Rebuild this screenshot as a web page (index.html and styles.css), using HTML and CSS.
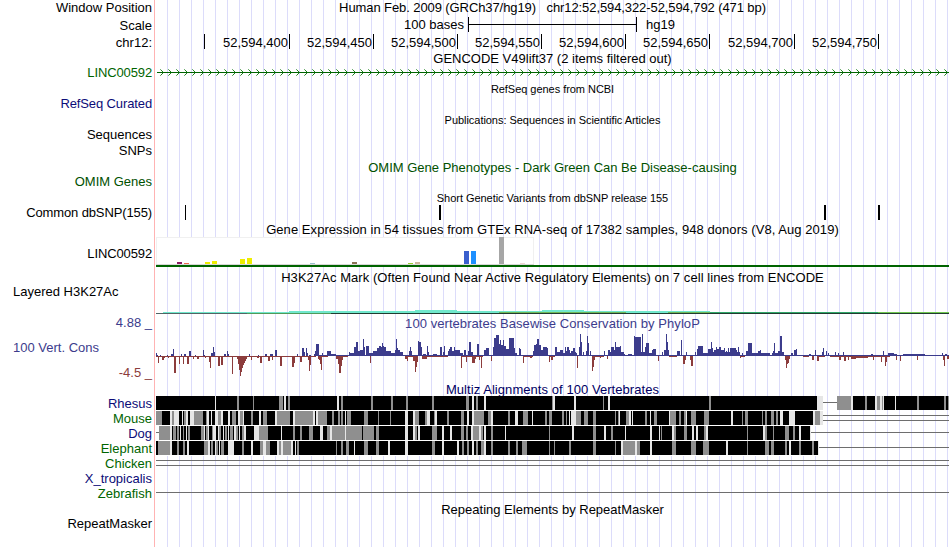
FILE: index.html
```
<!DOCTYPE html>
<html lang="en">
<head>
    <meta charset="UTF-8">
    <meta name="viewport" content="width=device-width, initial-scale=1.0">
    <title>Genome Browser - chr12:52,594,322-52,594,792</title>
    <link rel="stylesheet" href="styles.css">
</head>
<body>
    <div class="browser">
        <!-- position and ruler -->
        <div class="row position"><div class="label">Window Position</div><div class="main title">Human Feb. 2009 (GRCh37/hg19) &nbsp; chr12:52,594,322-52,594,792 (471 bp)</div></div>
        <div class="row scale">
            <div class="label">Scale</div>
            <div class="main"><span class="bases">100 bases</span><span class="scale-bar"></span><span>hg19</span></div>
        </div>
        <div class="row ruler">
            <div class="label">chr12:</div>
            <div class="main">
                <span class="tick first"></span>
                <span class="tick wide">52,594,400</span>
                <span class="tick">52,594,450</span>
                <span class="tick">52,594,500</span>
                <span class="tick">52,594,550</span>
                <span class="tick">52,594,600</span>
                <span class="tick">52,594,650</span>
                <span class="tick wide">52,594,700</span>
                <span class="tick">52,594,750</span>
            </div>
        </div>

        <!-- genes -->
        <div class="row head gencode"><div class="label"></div><div class="main title">GENCODE V49lift37 (2 items filtered out)</div></div>
        <div class="row"><div class="label narrow green">LINC00592</div><svg id="gene" viewBox="155 0 795 15"></svg></div>
        <div class="row head"><div class="label"></div><div class="main title small">RefSeq genes from NCBI</div></div>
        <div class="row"><div class="label narrow navy">RefSeq Curated</div></div>
        <div class="row head"><div class="label"></div><div class="main title small">Publications: Sequences in Scientific Articles</div></div>
        <div class="row tall"><div class="label">Sequences</div></div>
        <div class="row"><div class="label">SNPs</div></div>
        <div class="row head omim-head"><div class="label"></div><div class="main title omim">OMIM Gene Phenotypes - Dark Green Can Be Disease-causing</div></div>
        <div class="row"><div class="label omim">OMIM Genes</div></div>

        <!-- variants -->
        <div class="row head"><div class="label"></div><div class="main title small">Short Genetic Variants from dbSNP release 155</div></div>
        <div class="row tall"><div class="label narrow">Common dbSNP(155)</div><svg id="snps" viewBox="155 0 795 16"></svg></div>

        <!-- expression -->
        <div class="row head gtex-head"><div class="label"></div><div class="main title loose">Gene Expression in 54 tissues from GTEx RNA-seq of 17382 samples, 948 donors (V8, Aug 2019)</div></div>
        <div class="row gtex"><div class="label narrow">LINC00592</div><svg id="gtex" viewBox="155 0 795 33"></svg></div>
        <div class="row head"><div class="label"></div><div class="main title loose">H3K27Ac Mark (Often Found Near Active Regulatory Elements) on 7 cell lines from ENCODE</div></div>
        <div class="row h3k"><div class="label left">Layered H3K27Ac</div><svg id="h3k" viewBox="155 0 795 29"></svg></div>

        <!-- conservation -->
        <div class="row head phylop-head"><div class="label blue">4.88 _</div><div class="main title blue loose">100 vertebrates Basewise Conservation by PhyloP</div></div>
        <div class="row phylop">
            <div class="labels">
                <div class="label left blue">100 Vert. Cons</div>
                <div class="label red">-4.5 _</div>
            </div>
            <svg id="phylop" viewBox="155 0 795 51"></svg>
        </div>
        <div class="row multiz-head"><div class="label"></div><div class="main title navy loose">Multiz Alignments of 100 Vertebrates</div></div>
        <div class="row species"><div class="label navy">Rhesus</div><svg id="rhesus" viewBox="155 0 795 15"></svg></div>
        <div class="row species"><div class="label green">Mouse</div><svg id="mouse" viewBox="155 0 795 15"></svg></div>
        <div class="row species"><div class="label navy">Dog</div><svg id="dog" viewBox="155 0 795 15"></svg></div>
        <div class="row species"><div class="label green">Elephant</div><svg id="elephant" viewBox="155 0 795 15"></svg></div>
        <div class="row species"><div class="label green">Chicken</div><svg id="chicken" viewBox="155 0 795 15"></svg></div>
        <div class="row species"><div class="label navy">X_tropicalis</div></div>
        <div class="row species"><div class="label green">Zebrafish</div><svg id="zebrafish" viewBox="155 0 795 15"></svg></div>

        <div class="row head repeat-head"><div class="label"></div><div class="main title">Repeating Elements by RepeatMasker</div></div>
        <div class="row"><div class="label">RepeatMasker</div></div>
    </div>
    <script src="tracks.js"></script>
</body>
</html>
```
FILE: styles.css
```
body {
    margin: 0;
    background: #fff;
    color: #000;
    font-family: "Liberation Sans", Arial, sans-serif;
    font-size: 13px;
}

/* pink line next to the labels, then guide lines every 12px */
.browser {
    width: 950px;
    height: 547px;
    overflow: hidden;
    background:
        linear-gradient(#ffb3b3, #ffb3b3) 154px 0 / 1px 100% no-repeat,
        linear-gradient(#fff, #fff) 0 0 / 156px 100% no-repeat,
        linear-gradient(to right, transparent 11px, #dcdcfa 11px) 156px 0 / 12px 100% repeat-x;
}

.row {
    display: flex;
    height: 15px;
    line-height: 13px;
    white-space: nowrap;
}

.label {
    width: 152px;
    padding-right: 3px;
    flex: none;
    text-align: right;
}

.label.left {
    text-align: left;
    text-indent: 13px;
}

.label.narrow {
    letter-spacing: -0.12px;
}

.main {
    width: 795px;
    flex: none;
}

.title {
    text-align: center;
}

.loose {
    letter-spacing: 0.06px;
}

.small {
    font-size: 11px;
    letter-spacing: -0.04px;
}

svg {
    display: block;
    width: 795px;
    height: 100%;
    flex: none;
    shape-rendering: crispEdges;
}

.green { color: #006400; }
.omim { color: #005000; }
.navy { color: #0c0c78; }
.blue { color: #3c3c8c; }
.red { color: #8c3c3c; }

.title.navy { color: #000064; }

.tall { height: 16px; }

.head {
    height: 16px;
    line-height: 16px;
}

.position {
    height: 17px;
    line-height: 16px;
}

.position .title {
    letter-spacing: -0.09px;
}

/* scale bar */
.scale {
    height: 17px;
    line-height: 17px;
}

.scale .main {
    display: flex;
    line-height: 15px;
}

.bases {
    width: 309px;
    text-align: right;
}

.scale-bar {
    width: 167px;
    height: 15px;
    margin: 0 9px 0 4px;
    border-left: 1px solid #000;
    border-right: 1px solid #000;
    background: linear-gradient(#000, #000) 0 7px / 100% 1px no-repeat;
}

/* coordinates */
.ruler {
    height: 17px;
    line-height: 18px;
}

.ruler .main {
    display: flex;
}

.tick {
    box-sizing: border-box;
    width: 84px;
    height: 15px;
    padding-right: 1px;
    border-right: 1px solid #000;
    text-align: right;
}

.tick.first { width: 50px; }
.tick.wide { width: 85px; }

.gencode {
    height: 15px;
    line-height: 15px;
}

.omim-head .title { line-height: 18px; }

#snps { margin-top: -1px; }

.gtex-head { height: 15px; }

.gtex {
    height: 33px;
    line-height: 33px;
}

.h3k {
    height: 29px;
    line-height: 11px;
}

.phylop-head .title { line-height: 18px; }

.phylop { height: 51px; }

.labels {
    padding-top: 10px;
}

.labels .red {
    padding-top: 12px;
}

.multiz-head {
    height: 14px;
    line-height: 15px;
}

.species { line-height: 15px; }

.repeat-head {
    height: 16px;
    line-height: 17px;
}
```
FILE: tracks.js
```
const NS = "http://www.w3.org/2000/svg";

function rect(id, x, y, w, h, fill) {
    const r = document.createElementNS(NS, "rect");
    r.setAttribute("x", x);
    r.setAttribute("y", y);
    r.setAttribute("width", w);
    r.setAttribute("height", h);
    r.setAttribute("fill", fill);
    document.getElementById(id).appendChild(r);
}

// "x,w x,w ..." -> [[x, w], ...]
function parse(text) {
    return text.trim().split(/\s+/).map(item => item.split(",").map(Number));
}

// gene line with strand arrows
rect("gene", 157, 6, 792, 1, "#006400");
for (let x = 162; x < 949; x += 8) {
    for (let i = 1; i <= 3; i++) {
        const fill = i === 3 ? "#70b070" : "#208020";
        rect("gene", x - i + 1, 6 - i, 1, 1, fill);
        rect("gene", x - i + 1, 6 + i, 1, 1, fill);
    }
}

// variants
parse("185,1 439,2 824,2 878,2").forEach(([x, w]) => rect("snps", x, 0, w, 15, "#000"));

// GTEx tissues
rect("gtex", 156, 0, 378, 28, "#f0f0f0");
rect("gtex", 157, 1, 376, 26, "#fff");
rect("gtex", 156, 27, 378, 1, "#d8d8d8");
[
    [177, 2, "#8b1c62"], [184, 1, "#ee6a50"], [205, 2, "#eeee00"], [212, 3, "#eeee00"],
    [240, 5, "#eeee00"], [247, 6, "#eeee00"], [310, 1, "#9ac0cd"], [352, 2, "#8b7355"],
    [408, 1, "#9acd32"], [415, 2, "#cdb79e"], [464, 13, "#3a5fcd"], [471, 13, "#1e90ff"],
    [499, 27, "#a6a6a6"], [520, 1, "#eed5d2"]
].forEach(([x, h, fill]) => rect("gtex", x, 27 - h, 5, h, fill));
rect("gtex", 156, 28, 793, 2, "#006400");

// H3K27Ac
rect("h3k", 163, 26, 126, 1, "#70e8cc");
rect("h3k", 289, 25, 421, 2, "#70e8cc");
rect("h3k", 415, 24, 42, 1, "#70e8cc");
rect("h3k", 542, 24, 42, 1, "#70e8cc");
rect("h3k", 499, 26, 127, 1, "#70b858");
rect("h3k", 668, 26, 42, 1, "#70b858");
rect("h3k", 710, 26, 168, 1, "#30a868");
rect("h3k", 878, 26, 71, 1, "#70c850");
rect("h3k", 156, 27, 91, 1, "#506464");
rect("h3k", 247, 27, 84, 1, "#509a5a");
rect("h3k", 331, 27, 618, 1, "#203c30");

// conservation: x, width, score in pixels
const above = `
156,1,3 157,1,1 160,1,1 167,1,1 171,2,2 173,1,7 181,1,2 184,2,2 189,2,5 195,1,1 203,1,6 204,1,1
211,2,3 213,1,9 214,1,4 224,2,2 227,1,5 228,1,2 249,1,2 258,1,1 265,2,2 270,3,2 275,2,6 297,1,2
302,2,8 304,1,4 306,1,8 307,1,3 309,2,1 314,1,2 315,1,5 316,3,12 322,1,3 327,4,5 331,5,2
349,1,4 350,4,3 354,1,9 355,1,9 356,2,14 358,2,5 360,3,6 363,1,17 364,1,9 366,3,10 373,4,5 377,2,8 379,2,10
381,1,9 382,1,13 383,1,10 384,2,9 386,5,5 391,4,3 395,1,6 396,1,17 397,1,8 398,2,6 400,3,4 409,1,5 410,1,9 411,1,5
418,1,15 419,2,14 421,1,9 423,3,2 427,1,10 428,1,4 433,4,2 440,2,9 443,1,4 444,1,10 448,1,5 449,1,7 450,2,9
452,2,5 454,1,9 455,5,6 464,2,6 468,1,5 469,2,14 471,2,4 477,2,12 484,2,6 486,3,8 493,1,9 494,1,18 495,1,18
496,3,21 499,1,12 500,1,16 501,2,11 503,1,16 504,2,10 506,3,7 509,5,18 514,1,8 515,2,3 519,1,8 520,1,7
533,1,5 534,2,11 536,1,12 537,2,17 539,2,11 541,2,6 543,4,9 547,1,8 555,2,9 557,3,4 560,3,6 565,1,9 566,1,5
567,2,9 569,1,6 571,2,5 573,2,8 575,1,4 579,1,9 580,1,22 581,1,14 583,1,4 586,1,5 587,1,20 588,1,13 590,1,5
604,1,5 608,2,6 611,3,9 614,1,6 615,1,14 616,4,9 620,1,10 623,2,2 628,4,2 634,1,20 635,6,19 642,1,22
645,1,9 646,3,13 650,2,3 652,1,6 653,3,7 662,1,4 664,2,6 666,1,22 667,1,14 668,1,6 677,3,5 679,1,5 681,1,16
686,1,4 695,1,4 697,1,7 698,5,10 703,3,3 708,4,7 711,1,14 712,1,8 714,2,6 716,1,9 717,2,7 719,2,9 721,4,6
724,1,8 726,1,5 728,1,8 730,6,8 736,1,6 738,1,9 742,1,3 746,2,5 748,4,13 754,2,3 758,3,5 760,1,6 765,3,3
772,2,3 773,1,5 774,1,13 775,2,3 778,2,5 780,1,20 781,1,20 782,2,4 791,2,3 794,2,6 796,1,7 809,2,2 815,1,6
822,1,4 823,1,8 826,1,5 828,1,3 835,1,4 838,1,3 843,1,4 871,2,2 883,1,5 888,6,3 894,3,2 903,22,2 942,1,3 945,2,2
366,14,3 386,15,3 449,14,3 493,20,6 533,15,5 555,22,3 608,16,4 634,14,4 645,11,3 697,14,3 711,29,4 746,24,3 772,12,3`;
const below = `
158,1,7 162,2,4 164,1,2 168,1,2 174,2,17 179,1,8 183,1,8 187,2,8 193,1,3 197,2,3 205,1,2 209,1,6 210,1,12
218,2,10 221,2,9 232,1,18 237,1,3 238,1,8 239,1,14 240,1,20 241,1,16 242,1,12 243,1,9 244,1,7 245,1,5 246,1,3
251,1,4 257,2,2 260,2,7 268,2,5 272,1,4 280,2,10 292,2,11 294,1,7 300,2,6 308,1,4 309,1,15 310,1,9 318,1,3
319,1,4 320,1,8 321,1,14 336,2,3 338,1,8 339,2,17 341,1,10 342,1,4 370,1,7 405,3,3 407,1,5 413,2,5 415,1,16
416,1,11 417,1,6 422,5,3 461,1,12 466,1,6 472,3,7 475,1,3 479,1,4 481,1,12 491,1,5 523,1,7 530,2,2 549,1,6
551,2,4 577,1,12 592,1,15 593,1,11 594,1,4 600,1,2 607,1,3 658,1,5 683,2,8 685,1,4 691,2,10 690,1,4 740,1,2
785,1,4 786,1,12 787,1,8 788,1,7 789,1,3 812,2,4 817,2,5 839,2,4 844,2,5 848,1,4 851,5,3 856,12,2 873,1,4
881,1,6 885,1,10 886,1,6 896,1,4 900,1,5 917,1,4 943,1,4 944,1,10 947,2,3
322,6,1 336,12,1 405,8,1 422,26,1 461,22,1 523,10,1 549,6,1 592,12,1 669,8,1 740,5,1 803,6,1 817,8,1 830,60,1`;
rect("phylop", 316, 24, 633, 1, "#3c3c8c");
rect("phylop", 156, 25, 160, 1, "#8c3c3c");
parse(above).forEach(([x, w, h]) => rect("phylop", x, 25 - h, w, h, "#3c3c8c"));
parse(below).forEach(([x, w, h]) => rect("phylop", x, 25, w, h, "#8c3c3c"));

// alignments
const species = {
    rhesus: {
        black: "156,661 853,96",
        gray: "237,2 253,1 279,4 288,2 341,2 371,2 391,2 406,2 432,2 466,3 476,2 552,1 603,1 709,2 837,14 865,2 877,3 882,1 917,2 944,2 948,1",
        light: "215,1 284,2 337,2 472,2 484,2 553,2 574,2 608,2 817,6 851,2 875,2 880,2 883,1 895,1",
        lines: "823,14,6"
    },
    mouse: {
        black: "156,657",
        gray: "156,6 172,2 184,2 194,9 206,3 218,4 232,4 240,4 251,2 263,4 276,14 294,20 318,9 332,2 338,2 341,2 347,4 364,4 378,1 390,1 415,4 425,3 434,2 447,2 461,3 473,6 479,5 488,3 508,2 523,5 545,2 549,3 562,2 566,1 575,6 584,4 593,3 615,1 618,2 626,4 645,2 654,3 670,6 679,2 684,2 691,5 704,5 742,1 745,3 762,1 765,2 771,3 776,2 815,5",
        light: "170,2 174,5 182,1 186,2 190,4 207,2 211,1 215,3 221,2 228,2 238,2 243,1 259,2 275,2 293,2 313,2 316,2 345,1 405,3 413,2 427,3 435,2 467,2 472,2 491,2 515,3 532,1 569,1 571,5 619,1 629,2 632,1 650,1 669,1 686,1 731,2 780,3 789,6 813,2 820,3",
        lines: "823,126,4 823,126,9"
    },
    dog: {
        black: "159,651",
        gray: "159,11 173,3 177,2 183,1 188,2 201,3 206,2 212,1 219,2 225,2 230,3 236,2 242,3 259,7 266,2 293,2 300,2 309,4 327,3 331,31 363,11 376,3 415,2 432,5 461,3 466,2 473,6 480,3 491,2 549,1 593,3 611,2 661,1 674,2 684,3 704,2 747,1 765,2 773,1 785,4 793,2",
        light: "170,2 180,1 186,1 204,1 208,1 213,3 218,1 223,1 228,1 234,2 239,1 244,2 254,5 281,1 320,3 330,2 345,1 405,3 413,2 418,2 442,2 450,2 471,2 479,2 484,2 505,1 572,2 604,2 625,1 650,2 659,1 672,2 692,2 696,2 706,2 763,2 799,2 810,1",
        lines: "156,3,6 811,138,6"
    },
    elephant: {
        black: "156,662",
        gray: "158,12 177,2 183,2 204,4 211,2 216,2 221,3 242,2 260,3 266,4 279,2 283,8 297,2 336,1 341,2 346,3 364,4 376,3 432,3 462,2 467,2 476,2 481,3 491,2 508,2 516,2 522,5 549,1 554,1 569,2 593,3 615,1 623,13 637,3 672,4 691,5 703,6 747,1 765,4 771,3 785,2 799,2 812,2",
        light: "170,2 187,2 208,2 215,1 219,1 228,6 251,2 263,3 277,2 281,2 291,2 295,1 354,1 388,2 405,3 442,2 457,2 472,2 484,2 621,2 635,2 650,2 726,2 789,2 818,1",
        lines: "819,130,6"
    },
    chicken: { lines: "156,793,4 156,793,9" },
    zebrafish: { lines: "156,793,6" }
};

for (const id in species) {
    const s = species[id];
    const fills = { black: "#000", gray: "#8f8f8f", light: "#e6e6e6" };
    if (s.black) {
        rect(id, 156, 14, 661, 1, "#fff");
    }
    for (const key in fills) {
        if (s[key]) parse(s[key]).forEach(([x, w]) => rect(id, x, 0, w, 14, fills[key]));
    }
    parse(s.lines).forEach(([x, w, y]) => rect(id, x, y, w, 1, "#6e6e6e"));
}
```
